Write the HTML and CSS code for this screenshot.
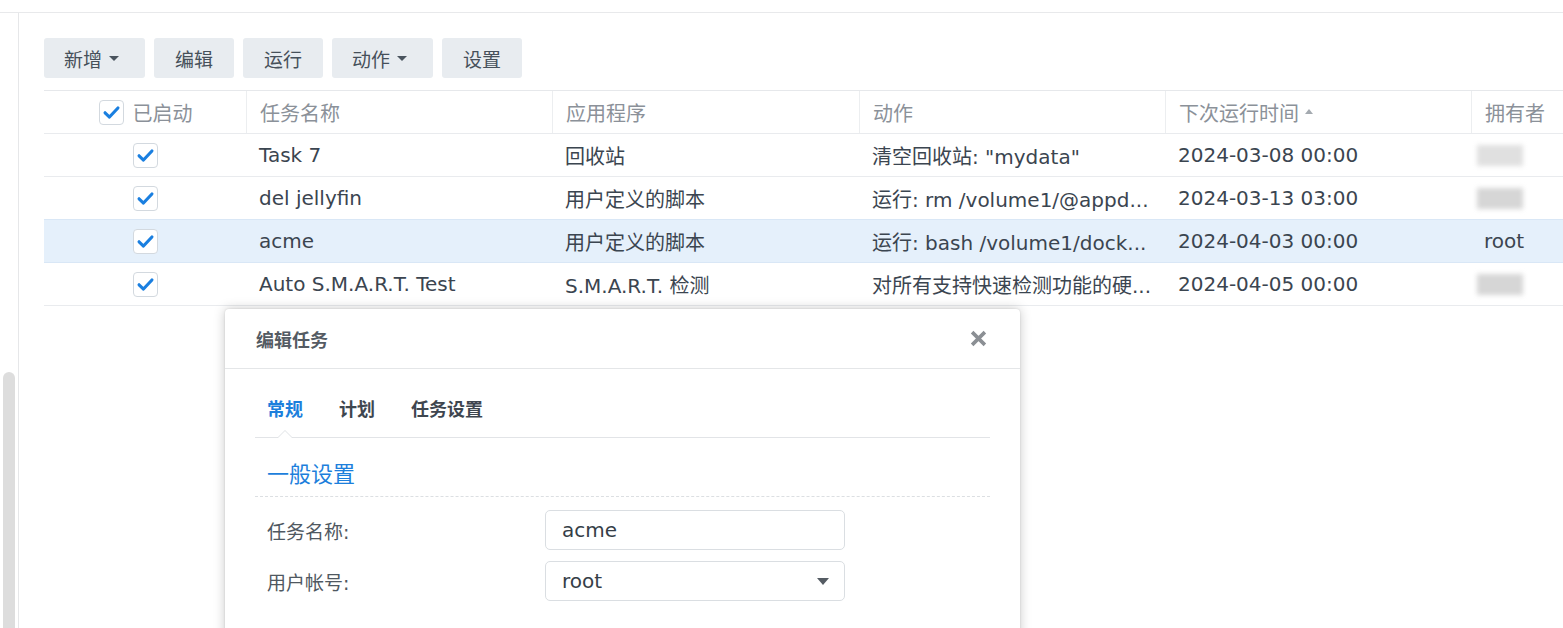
FILE: index.html
```html
<!DOCTYPE html>
<html lang="zh-CN">
<head>
<meta charset="utf-8">
<title>任务计划</title>
<link rel="stylesheet" href="styles.css">
</head>
<body>
<div class="app">
  <div class="topbar"></div>
  <div class="main">
    <aside class="side"><div class="thumb"></div></aside>
    <section class="content">
      <div class="toolbar">
        <button class="btn">新增<span class="caret"></span></button>
        <button class="btn">编辑</button>
        <button class="btn">运行</button>
        <button class="btn">动作<span class="caret"></span></button>
        <button class="btn">设置</button>
      </div>
      <div class="grid">
        <div class="row head">
          <div class="cell center"><span class="cb"><svg viewBox="0 0 25 25"><path d="M5.5 12.8 L10.3 17.4 L19.5 7.6"/></svg></span><span class="cb-label">已启动</span></div>
          <div class="cell">任务名称</div>
          <div class="cell">应用程序</div>
          <div class="cell">动作</div>
          <div class="cell">下次运行时间<span class="sort"></span></div>
          <div class="cell">拥有者</div>
        </div>
        <div class="row">
          <div class="cell center"><span class="cb"><svg viewBox="0 0 25 25"><path d="M5.5 12.8 L10.3 17.4 L19.5 7.6"/></svg></span></div>
          <div class="cell">Task 7</div>
          <div class="cell">回收站</div>
          <div class="cell">清空回收站: "mydata"</div>
          <div class="cell">2024-03-08 00:00</div>
          <div class="cell"><span class="blur b1"></span></div>
        </div>
        <div class="row">
          <div class="cell center"><span class="cb"><svg viewBox="0 0 25 25"><path d="M5.5 12.8 L10.3 17.4 L19.5 7.6"/></svg></span></div>
          <div class="cell">del jellyfin</div>
          <div class="cell">用户定义的脚本</div>
          <div class="cell">运行: rm /volume1/@appd...</div>
          <div class="cell">2024-03-13 03:00</div>
          <div class="cell"><span class="blur b2"></span></div>
        </div>
        <div class="row selected">
          <div class="cell center"><span class="cb"><svg viewBox="0 0 25 25"><path d="M5.5 12.8 L10.3 17.4 L19.5 7.6"/></svg></span></div>
          <div class="cell">acme</div>
          <div class="cell">用户定义的脚本</div>
          <div class="cell">运行: bash /volume1/dock...</div>
          <div class="cell">2024-04-03 00:00</div>
          <div class="cell">root</div>
        </div>
        <div class="row">
          <div class="cell center"><span class="cb"><svg viewBox="0 0 25 25"><path d="M5.5 12.8 L10.3 17.4 L19.5 7.6"/></svg></span></div>
          <div class="cell">Auto S.M.A.R.T. Test</div>
          <div class="cell">S.M.A.R.T. 检测</div>
          <div class="cell">对所有支持快速检测功能的硬...</div>
          <div class="cell">2024-04-05 00:00</div>
          <div class="cell"><span class="blur b2"></span></div>
        </div>
      </div>
    </section>
  </div>

  <div class="dialog">
    <div class="dlg-head">
      <span class="dlg-title">编辑任务</span>
      <svg class="close" viewBox="0 0 16 16"><path d="M2 2 L14 14 M14 2 L2 14"/></svg>
    </div>
    <div class="dlg-body">
      <div class="tabs">
        <span class="tab active">常规</span>
        <span class="tab">计划</span>
        <span class="tab">任务设置</span>
      </div>
      <div class="section-title">一般设置</div>
      <div class="form">
        <div class="form-row">
          <label class="label">任务名称:</label>
          <div class="field">acme</div>
        </div>
        <div class="form-row">
          <label class="label">用户帐号:</label>
          <div class="field select">root<span class="arrow"></span></div>
        </div>
      </div>
    </div>
  </div>
</div>
</body>
</html>
```

FILE: styles.css
```css
* { box-sizing: border-box; }
html, body {
  margin: 0;
  padding: 0;
  width: 1563px;
  height: 628px;
  overflow: hidden;
  background: #ffffff;
}
body {
  font-family: "DejaVu Sans", "Noto Sans CJK SC", sans-serif;
  font-size: 20px;
  color: #3b4550;
}
.app {
  position: relative;
  height: 628px;
  display: flex;
  flex-direction: column;
  overflow: hidden;
}
.topbar {
  height: 13px;
  border-bottom: 1px solid #e8e9eb;
  flex: none;
}
.main {
  flex: 1;
  display: flex;
  min-height: 0;
}
.side {
  width: 19px;
  flex: none;
  border-right: 1px solid #e6e7e9;
  display: flex;
  flex-direction: column;
  padding-top: 359px;
}
.thumb {
  flex: 1;
  width: 12px;
  margin-left: 3px;
  background: #dddddd;
  border-radius: 6px 6px 0 0;
}
.content {
  flex: 1;
  padding: 25px 0 0 25px;
  min-width: 0;
  overflow: hidden;
}
.toolbar {
  display: flex;
  gap: 9px;
  height: 40px;
  margin-bottom: 12px;
}
.btn {
  font-family: inherit;
  font-size: 19px;
  color: #46505a;
  background: #e8ecf0;
  border: none;
  border-radius: 3px;
  height: 40px;
  padding: 0 20px;
  display: flex;
  align-items: center;
  min-width: 80px;
  justify-content: center;
}
.caret {
  width: 0;
  height: 0;
  border-left: 5px solid transparent;
  border-right: 5px solid transparent;
  border-top: 5px solid #4a545e;
  margin: 0 6px 0 7px;
}
.grid {
  width: 1519px;
  border-top: 1px solid #e6e8eb;
}
.row {
  display: grid;
  grid-template-columns: 202px 306px 307px 306px 306px 1fr;
  height: 43px;
  border-bottom: 1px solid #e9ebee;
}
.row.head { color: #8b9199; }
.row.head .cell + .cell { border-left: 1px solid #eceef0; }
.row.selected {
  background: #e5f0fb;
  border-top: 1px solid #d9e7f6;
  margin-top: -1px;
  height: 44px;
  border-bottom-color: #d9e7f6;
}
.cell {
  display: flex;
  align-items: center;
  padding: 0 13px;
  white-space: nowrap;
  overflow: hidden;
  min-width: 0;
}
.cell.center { justify-content: center; }
.cb {
  width: 25px;
  height: 25px;
  border: 1px solid #d3d9df;
  border-radius: 4px;
  background: #fff;
  display: inline-flex;
  flex: none;
}
.row .cell.center .cb { margin-left: 1px; }
.cb svg { width: 23px; height: 23px; }
.cb path {
  fill: none;
  stroke: #1a7fe0;
  stroke-width: 3.4;
  stroke-linecap: round;
  stroke-linejoin: round;
}
.cb-label { margin-left: 9px; }
.sort {
  width: 0;
  height: 0;
  border-left: 4px solid transparent;
  border-right: 4px solid transparent;
  border-bottom: 5px solid #a4aab0;
  margin-left: 6px;
  margin-top: -2px;
}
.blur {
  display: block;
  width: 46px;
  height: 21px;
  margin-left: -7px;
  background: #d6d6d6;
  filter: blur(2.5px);
}
.blur.b1 { background: #e0e0e0; }

/* dialog */
.dialog {
  position: absolute;
  left: 225px;
  top: 309px;
  width: 795px;
  height: 400px;
  background: #fff;
  border-radius: 4px;
  box-shadow: 0 0 12px rgba(0, 0, 0, 0.22), 0 0 2px rgba(0, 0, 0, 0.12);
}
.dlg-head {
  height: 60px;
  border-bottom: 1px solid #e4e6e8;
  display: flex;
  align-items: center;
  justify-content: space-between;
  padding: 0 33px 0 31px;
}
.dlg-title {
  font-size: 18px;
  font-weight: bold;
  color: #545b63;
}
.close { width: 17px; height: 17px; }
.close path {
  stroke: #8b8f94;
  stroke-width: 3.4;
  fill: none;
}
.dlg-body { padding: 0 30px; }
.tabs {
  display: flex;
  gap: 36px;
  padding: 30px 12px 16px;
  line-height: 22px;
  border-bottom: 1px solid #e2e4e7;
}
.tab {
  font-size: 18px;
  font-weight: bold;
  color: #3e464f;
  position: relative;
}
.tab.active { color: #1d7fdc; }
.tab.active::before,
.tab.active::after {
  content: "";
  position: absolute;
  left: 50%;
  width: 0;
  height: 0;
  border-style: solid;
  border-color: transparent;
}
.tab.active::before {
  bottom: -17px;
  margin-left: -8px;
  border-width: 0 8px 8px 8px;
  border-bottom-color: #dfe2e5;
}
.tab.active::after {
  bottom: -17px;
  margin-left: -7px;
  border-width: 0 7px 7px 7px;
  border-bottom-color: #fff;
}
.section-title {
  margin-top: 22px;
  padding: 0 12px 6px;
  line-height: 30px;
  font-size: 22px;
  color: #1d7fdc;
  border-bottom: 1px dashed #dcdfe2;
}
.form {
  padding: 13px 0 0 12px;
  display: flex;
  flex-direction: column;
  gap: 11px;
}
.form-row {
  display: flex;
  align-items: center;
  height: 40px;
}
.label {
  width: 278px;
  font-size: 19px;
  color: #4f5861;
}
.field {
  width: 300px;
  height: 40px;
  border: 1px solid #dadee2;
  border-radius: 5px;
  padding: 0 16px;
  display: flex;
  align-items: center;
  color: #353e47;
}
.field.select { justify-content: space-between; }
.arrow {
  width: 0;
  height: 0;
  border-left: 6px solid transparent;
  border-right: 6px solid transparent;
  border-top: 7px solid #555c63;
  margin-right: -1px;
}
```
